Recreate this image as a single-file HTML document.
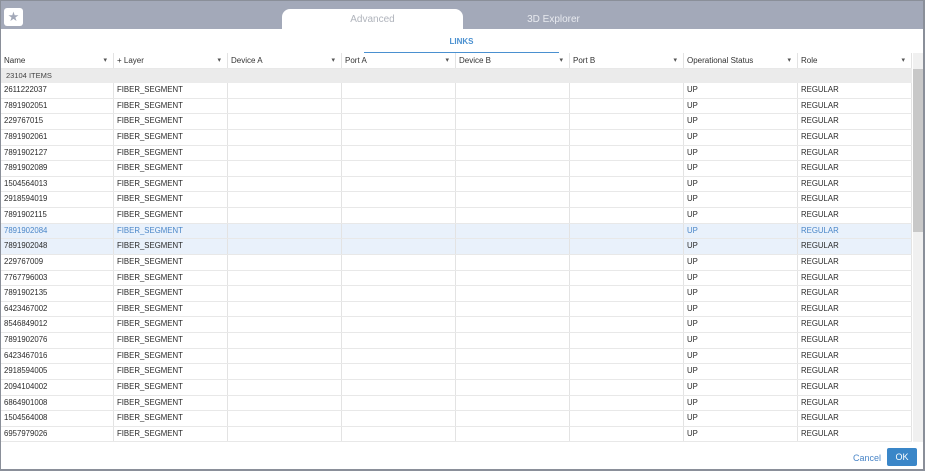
<!DOCTYPE html><html><head><style>
*{margin:0;padding:0;box-sizing:border-box}
body{width:927px;height:473px;overflow:hidden;background:#fff;font-family:"Liberation Sans",sans-serif;position:relative}
.frame{position:absolute;left:0;top:0;width:925px;height:471px;border:1px solid #8a8f99;border-right:2px solid #8a8f99;border-bottom:2px solid #8a8f99}
.top{position:absolute;left:1px;top:1px;width:922px;height:28px;background:#a3a9b9}
.star{position:absolute;left:3px;top:7px;width:19px;height:18px;background:#fff;border-radius:3px;color:#a3a9b9;font-size:13px;text-align:center;line-height:18px}
.tab{position:absolute;left:281px;top:8px;width:181px;height:21px;background:#fff;border-radius:8px 8px 0 0;color:#b0b4bc;font-size:10px;text-align:center;line-height:21px}
.tab2{position:absolute;left:462px;top:8px;width:181px;height:21px;color:#e8eaef;font-size:10px;text-align:center;line-height:21px}
.links{position:absolute;left:364px;top:37px;width:195px;height:16px;border-bottom:1px solid #4a90d0;color:#4a90d0;font-size:8px;font-weight:bold;text-align:center}
.grid{position:absolute;left:1px;top:53px;width:911px}
.row{height:15.64px;display:flex;border-bottom:1px solid #e8e8e8;font-size:7.8px;color:#2a2a2a}
.row div{width:114px;border-right:1px solid #e3e3e3;padding-left:3px;line-height:14px;white-space:nowrap}
.row div:first-child{width:113px}
.hdr{height:16px;font-size:8px;color:#333}
.hdr div{position:relative;line-height:16px}
.hdr div::after{content:"▾";position:absolute;right:6px;top:0;font-size:7px;color:#555}
.items{height:14px;background:#ebebeb;font-size:7.5px;color:#444;line-height:14px;padding-left:5px}
.sel{background:#e9f1fb}
.sel.b div{color:#4a86c8}
.sb{position:absolute;left:913px;top:53px;width:10px;height:389px;background:#f0f0f0}
.thumb{position:absolute;left:913px;top:69px;width:10px;height:163px;background:#c8c8c8}
.cancel{position:absolute;left:853px;top:453px;color:#4a86c8;font-size:9px}
.ok{position:absolute;left:887px;top:448px;width:30px;height:18px;background:#3a86c8;color:#fff;font-size:9px;text-align:center;line-height:18px;border-radius:2px}
</style></head><body>
<div class="top"><div class="star">★</div><div class="tab">Advanced</div><div class="tab2">3D Explorer</div></div>
<div class="links">LINKS</div>
<div class="grid">
<div class="row hdr"><div>Name</div><div>+ Layer</div><div>Device A</div><div>Port A</div><div>Device B</div><div>Port B</div><div>Operational Status</div><div>Role</div></div>
<div class="items">23104 ITEMS</div>
<div class="row"><div>2611222037</div><div>FIBER_SEGMENT</div><div></div><div></div><div></div><div></div><div>UP</div><div>REGULAR</div></div>
<div class="row"><div>7891902051</div><div>FIBER_SEGMENT</div><div></div><div></div><div></div><div></div><div>UP</div><div>REGULAR</div></div>
<div class="row"><div>229767015</div><div>FIBER_SEGMENT</div><div></div><div></div><div></div><div></div><div>UP</div><div>REGULAR</div></div>
<div class="row"><div>7891902061</div><div>FIBER_SEGMENT</div><div></div><div></div><div></div><div></div><div>UP</div><div>REGULAR</div></div>
<div class="row"><div>7891902127</div><div>FIBER_SEGMENT</div><div></div><div></div><div></div><div></div><div>UP</div><div>REGULAR</div></div>
<div class="row"><div>7891902089</div><div>FIBER_SEGMENT</div><div></div><div></div><div></div><div></div><div>UP</div><div>REGULAR</div></div>
<div class="row"><div>1504564013</div><div>FIBER_SEGMENT</div><div></div><div></div><div></div><div></div><div>UP</div><div>REGULAR</div></div>
<div class="row"><div>2918594019</div><div>FIBER_SEGMENT</div><div></div><div></div><div></div><div></div><div>UP</div><div>REGULAR</div></div>
<div class="row"><div>7891902115</div><div>FIBER_SEGMENT</div><div></div><div></div><div></div><div></div><div>UP</div><div>REGULAR</div></div>
<div class="row sel b"><div>7891902084</div><div>FIBER_SEGMENT</div><div></div><div></div><div></div><div></div><div>UP</div><div>REGULAR</div></div>
<div class="row sel"><div>7891902048</div><div>FIBER_SEGMENT</div><div></div><div></div><div></div><div></div><div>UP</div><div>REGULAR</div></div>
<div class="row"><div>229767009</div><div>FIBER_SEGMENT</div><div></div><div></div><div></div><div></div><div>UP</div><div>REGULAR</div></div>
<div class="row"><div>7767796003</div><div>FIBER_SEGMENT</div><div></div><div></div><div></div><div></div><div>UP</div><div>REGULAR</div></div>
<div class="row"><div>7891902135</div><div>FIBER_SEGMENT</div><div></div><div></div><div></div><div></div><div>UP</div><div>REGULAR</div></div>
<div class="row"><div>6423467002</div><div>FIBER_SEGMENT</div><div></div><div></div><div></div><div></div><div>UP</div><div>REGULAR</div></div>
<div class="row"><div>8546849012</div><div>FIBER_SEGMENT</div><div></div><div></div><div></div><div></div><div>UP</div><div>REGULAR</div></div>
<div class="row"><div>7891902076</div><div>FIBER_SEGMENT</div><div></div><div></div><div></div><div></div><div>UP</div><div>REGULAR</div></div>
<div class="row"><div>6423467016</div><div>FIBER_SEGMENT</div><div></div><div></div><div></div><div></div><div>UP</div><div>REGULAR</div></div>
<div class="row"><div>2918594005</div><div>FIBER_SEGMENT</div><div></div><div></div><div></div><div></div><div>UP</div><div>REGULAR</div></div>
<div class="row"><div>2094104002</div><div>FIBER_SEGMENT</div><div></div><div></div><div></div><div></div><div>UP</div><div>REGULAR</div></div>
<div class="row"><div>6864901008</div><div>FIBER_SEGMENT</div><div></div><div></div><div></div><div></div><div>UP</div><div>REGULAR</div></div>
<div class="row"><div>1504564008</div><div>FIBER_SEGMENT</div><div></div><div></div><div></div><div></div><div>UP</div><div>REGULAR</div></div>
<div class="row"><div>6957979026</div><div>FIBER_SEGMENT</div><div></div><div></div><div></div><div></div><div>UP</div><div>REGULAR</div></div>
</div>
<div class="sb"></div><div class="thumb"></div>
<div class="cancel">Cancel</div><div class="ok">OK</div>
<div class="frame"></div>
</body></html>
